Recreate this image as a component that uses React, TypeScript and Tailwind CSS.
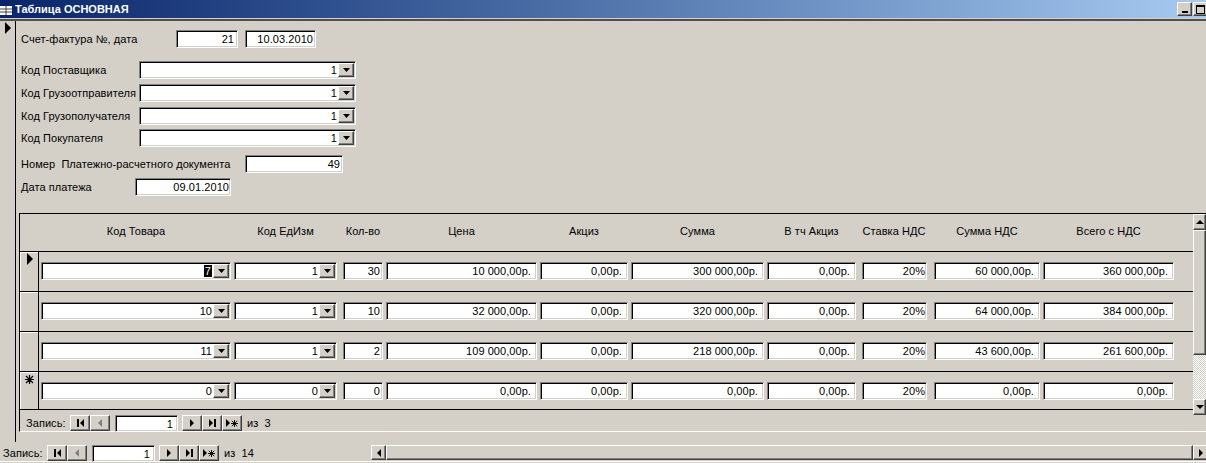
import React from 'react';

const sunken =
  'border border-t-[#808080] border-l-[#808080] border-b-white border-r-white bg-white shadow-[inset_1px_1px_0_#000,inset_-1px_-1px_0_#d4d0c8]';
const raised =
  'border border-t-white border-l-white border-b-[#404040] border-r-[#404040] bg-[#d4d0c8] shadow-[inset_-1px_-1px_0_#808080]';

const rows = [
  { kod: '7', ed: '1', qty: '30', price: '10 000,00р.', akc: '0,00р.', sum: '300 000,00р.', vtch: '0,00р.', nds: '20%', sumNds: '60 000,00р.', total: '360 000,00р.', mark: 'current' },
  { kod: '10', ed: '1', qty: '10', price: '32 000,00р.', akc: '0,00р.', sum: '320 000,00р.', vtch: '0,00р.', nds: '20%', sumNds: '64 000,00р.', total: '384 000,00р.', mark: '' },
  { kod: '11', ed: '1', qty: '2', price: '109 000,00р.', akc: '0,00р.', sum: '218 000,00р.', vtch: '0,00р.', nds: '20%', sumNds: '43 600,00р.', total: '261 600,00р.', mark: '' },
  { kod: '0', ed: '0', qty: '0', price: '0,00р.', akc: '0,00р.', sum: '0,00р.', vtch: '0,00р.', nds: '20%', sumNds: '0,00р.', total: '0,00р.', mark: 'new' },
];

const headers = ['Код Товара', 'Код ЕдИзм', 'Кол-во', 'Цена', 'Акциз', 'Сумма', 'В тч Акциз', 'Ставка НДС', 'Сумма НДС', 'Всего с НДС'];

const gridCols = 'grid grid-cols-[190px_106px_40px_151px_88px_133px_92px_69px_106px_131px] gap-x-[3px]';

const Field = ({ value, className = '' }: { value: string; className?: string }) => (
  <div className={`${sunken} h-[18px] text-right leading-[16px] whitespace-nowrap ${className}`}>{value}</div>
);

const Arrow = ({ dir, color = '#000' }: { dir: 'up' | 'down' | 'left' | 'right'; color?: string }) => {
  const points = {
    up: '4,0 8,4 0,4',
    down: '0,0 8,0 4,4',
    left: '4,0 4,8 0,4',
    right: '0,0 4,4 0,8',
  }[dir];
  const size = dir === 'up' || dir === 'down' ? 'w-[8px] h-[4px]' : 'w-[4px] h-[8px]';
  return (
    <svg viewBox={dir === 'up' || dir === 'down' ? '0 0 8 4' : '0 0 4 8'} className={size}>
      <polygon points={points} fill={color} />
    </svg>
  );
};

const Combo = ({ value, selected, className = '' }: { value: string; selected?: boolean; className?: string }) => (
  <div className={`${sunken} h-[18px] flex items-stretch p-[1px] leading-[15px] ${className}`}>
    <div className="flex-1 text-right pr-[1px] whitespace-nowrap">
      {selected ? <span className="bg-black text-white px-[1px]">{value}</span> : value}
    </div>
    <div className={`${raised} w-[16px] flex items-center justify-center`}>
      <svg viewBox="0 0 7 4" className="w-[7px] h-[4px]">
        <polygon points="0,0 7,0 3.5,4" fill="#000" />
      </svg>
    </div>
  </div>
);

const Star = ({ small }: { small?: boolean }) => (
  <svg viewBox="0 0 9 9" className={small ? 'w-[7px] h-[7px]' : 'w-[9px] h-[9px]'} stroke="#000" strokeWidth="1.2" fill="none">
    <path d="M4.5 0V9M0 4.5H9M1 1L8 8M8 1L1 8" />
  </svg>
);

const NavBtn = ({ children }: { children: React.ReactNode }) => (
  <div className={`${raised} w-[20px] h-[16px] flex items-center justify-center gap-[1px]`}>
    {children}
  </div>
);

const Bar = ({ color = '#000' }: { color?: string }) => (
  <svg viewBox="0 0 2 8" className="w-[2px] h-[8px]">
    <rect width="2" height="8" fill={color} />
  </svg>
);

const Nav = ({ total, value }: { total: string; value: string }) => (
  <div className="flex items-center h-[16px]">
    <span className="w-[44px] whitespace-nowrap">Запись:</span>
    <NavBtn>
      <Bar />
      <Arrow dir="left" />
    </NavBtn>
    <NavBtn>
      <Arrow dir="left" color="#808080" />
    </NavBtn>
    <div className={`${sunken} w-[63px] h-[17px] ml-[5px] text-right pr-[4px] leading-[16px]`}>{value}</div>
    <div className="ml-[4px] flex">
      <NavBtn>
        <Arrow dir="right" />
      </NavBtn>
      <NavBtn>
        <Arrow dir="right" />
        <Bar />
      </NavBtn>
      <NavBtn>
        <Arrow dir="right" />
        <Star small />
      </NavBtn>
    </div>
    <span className="ml-[5px] whitespace-nowrap">из&nbsp;&nbsp;{total}</span>
  </div>
);

const VScroll = () => (
  <div className="w-[13px] shrink-0 h-[201px] flex flex-col">
    <div className={`${raised} h-[16px] flex items-center justify-center`}>
      <Arrow dir="up" />
    </div>
    <div className={`${raised} h-[125px]`} />
    <div className="h-[44px] bg-[repeating-conic-gradient(#ffffff_0_25%,#d4d0c8_0_50%)] bg-[length:2px_2px]" />
    <div className={`${raised} h-[16px] flex items-center justify-center`}>
      <Arrow dir="down" />
    </div>
  </div>
);

const FormRow = ({ label, labelWidth, children, className = '' }: { label: string; labelWidth: string; children: React.ReactNode; className?: string }) => (
  <div className={`flex items-center h-[18px] ${className}`}>
    <span className={`${labelWidth} shrink-0 whitespace-nowrap`}>{label}</span>
    {children}
  </div>
);

export default function App() {
  return (
    <div className="w-[1206px] h-[463px] overflow-hidden bg-[#d4d0c8] text-black text-[11px] tracking-[0.06px] font-['Liberation_Sans',Arial,sans-serif] flex flex-col">
      {/* title bar */}
      <div className="h-[18px] shrink-0 flex items-center bg-gradient-to-r from-[#0a246a] to-[#a6caf0]">
        <svg viewBox="0 0 12 12" className="w-[12px] h-[12px] shrink-0">
          <rect width="12" height="12" fill="#fff" />
          <rect y="0" width="12" height="3" fill="#0a246a" />
          <path d="M0 6H12M0 9H12M6 3V12" stroke="#404040" strokeWidth="1" />
        </svg>
        <span className="ml-[3px] text-white font-bold text-[11px] tracking-normal whitespace-nowrap">Таблица ОСНОВНАЯ</span>
        <div className="ml-auto flex gap-[1px] -mr-[2px]">
          <div className={`${raised} w-[15px] h-[14px] flex items-end justify-center pb-[2px]`}>
            <div className="w-[6px] h-[2px] bg-black" />
          </div>
          <div className={`${raised} w-[15px] h-[14px] flex items-center justify-center`}>
            <div className="w-[9px] h-[9px] border border-t-2 border-black" />
          </div>
        </div>
      </div>
      <div className="h-[3px] shrink-0 border-t border-[#d4d0c8] bg-[#505050]" />

      {/* form */}
      <div className="h-[421px] shrink-0 flex">
        <div className="w-[16px] shrink-0 border-r border-black pt-[1px] pl-[5px]">
          <svg viewBox="0 0 6 12" className="w-[6px] h-[12px]">
            <polygon points="0,0 6,6 0,12" fill="#000" />
          </svg>
        </div>
        <div className="flex-1 min-w-0 flex flex-col">
          <div className="pl-[5px] pt-[9px]">
            <FormRow label="Счет-фактура №, дата" labelWidth="w-[155px]">
              <Field value="21" className="w-[62px] pr-[3px]" />
              <Field value="10.03.2010" className="w-[71px] ml-[7px] pr-[2px]" />
            </FormRow>
            <FormRow label="Код Поставщика" labelWidth="w-[118px]" className="mt-[13px]">
              <Combo value="1" className="w-[217px]" />
            </FormRow>
            <FormRow label="Код Грузоотправителя" labelWidth="w-[118px]" className="mt-[5px]">
              <Combo value="1" className="w-[217px]" />
            </FormRow>
            <FormRow label="Код Грузополучателя" labelWidth="w-[118px]" className="mt-[5px]">
              <Combo value="1" className="w-[217px]" />
            </FormRow>
            <FormRow label="Код Покупателя" labelWidth="w-[118px]" className="mt-[4px]">
              <Combo value="1" className="w-[217px]" />
            </FormRow>
            <FormRow label="Номер  Платежно-расчетного документа" labelWidth="w-[224px] whitespace-pre" className="mt-[8px]">
              <Field value="49" className="w-[98px] pr-[2px]" />
            </FormRow>
            <FormRow label="Дата платежа" labelWidth="w-[114px]" className="mt-[5px]">
              <Field value="09.01.2010" className="w-[96px] pr-[1px]" />
            </FormRow>
          </div>

          {/* subform */}
          <div className="mt-[17px] ml-[3px] h-[219px] flex border-t border-l border-black border-b border-b-white">
            <div className="flex-1 min-w-0 flex flex-col">
              <div className="h-[38px] shrink-0 border-b border-black pl-[21px] flex items-center pb-[2px]">
                <div className={`${gridCols} w-full`}>
                  {headers.map((h) => (
                    <div
                      key={h}
                      className={`text-center whitespace-nowrap ${h === 'Код ЕдИзм' ? 'mr-[3px]' : ''} ${h === 'Ставка НДС' ? 'pr-[5px]' : ''} ${h === 'В тч Акциз' ? 'pr-[3px]' : ''}`}
                    >
                      {h}
                    </div>
                  ))}
                </div>
              </div>
              {rows.map((r, i) => (
                <div key={i} className={`${i === 3 ? 'h-[38px]' : 'h-[40px]'} shrink-0 border-b border-black flex`}>
                  <div className="w-[19px] shrink-0 border-r border-black border-l border-l-white bg-[#d4d0c8] shadow-[inset_0_1px_0_#fff] flex justify-center pt-[1px]">
                    {r.mark === 'current' && (
                      <svg viewBox="0 0 6 12" className="w-[6px] h-[12px]">
                        <polygon points="0,0 6,6 0,12" fill="#000" />
                      </svg>
                    )}
                    {r.mark === 'new' && (
                      <div className="pt-[2px] h-[9px]">
                        <Star />
                      </div>
                    )}
                  </div>
                  <div className={`${gridCols} ml-[2px] pt-[10px] items-start`}>
                    <Combo value={r.kod} selected={r.mark === 'current'} />
                    <Combo value={r.ed} className="mr-[3px]" />
                    <Field value={r.qty} className="pr-[2px]" />
                    <Field value={r.price} className="pr-[5px]" />
                    <Field value={r.akc} className="pr-[5px]" />
                    <Field value={r.sum} className="pr-[5px]" />
                    <Field value={r.vtch} className="pr-[5px] mr-[3px]" />
                    <Field value={r.nds} className="pr-[1px] mr-[4px]" />
                    <Field value={r.sumNds} className="pr-[5px]" />
                    <Field value={r.total} className="pr-[5px]" />
                  </div>
                </div>
              ))}
              <div className="pl-[6px] pt-[5px]">
                <Nav total="3" value="1" />
              </div>
            </div>
            <VScroll />
          </div>
        </div>
      </div>

      {/* main record navigator + horizontal scrollbar */}
      <div className="flex-1 flex items-start pl-[3px] pt-[3px] border-b border-white mb-[1px]">
        <Nav total="14" value="1" />
        <div className="ml-auto w-[835px] h-[15px] flex">
          <div className={`${raised} w-[15px] flex items-center justify-center`}>
            <Arrow dir="left" />
          </div>
          <div className={`${raised} flex-1`} />
          <div className={`${raised} w-[15px] flex items-center justify-center -mr-[2px]`}>
            <Arrow dir="right" />
          </div>
        </div>
      </div>
    </div>
  );
}
